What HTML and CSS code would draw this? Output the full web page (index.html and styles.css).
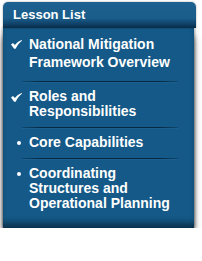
FILE: index.html
```html
<!DOCTYPE html>
<html lang="en">
<head>
<meta charset="utf-8">
<title>Lesson List</title>
<link rel="stylesheet" href="styles.css">
</head>
<body>
<div class="panel">
  <div class="header">Lesson List</div>
  <ul class="list">
    <li class="item item-first">
      <span class="marker"><svg class="check" width="11" height="9" viewBox="0 0 11 9"><path d="M0 4.4 L2 2.9 L3.9 4.9 C5.6 2.8 7.8 1 10.6 0 L11 0.7 C8.5 2.4 6.5 4.8 4.6 8.8 L3.1 8.8 Z" fill="#fff"/></svg></span>
      <span class="text">National Mitigation Framework Overview</span>
    </li>
    <li class="sep"></li>
    <li class="item">
      <span class="marker"><svg class="check" width="11" height="9" viewBox="0 0 11 9"><path d="M0 4.4 L2 2.9 L3.9 4.9 C5.6 2.8 7.8 1 10.6 0 L11 0.7 C8.5 2.4 6.5 4.8 4.6 8.8 L3.1 8.8 Z" fill="#fff"/></svg></span>
      <span class="text">Roles and Responsibilities</span>
    </li>
    <li class="sep"></li>
    <li class="item">
      <span class="marker"><span class="dot"></span></span>
      <span class="text">Core Capabilities</span>
    </li>
    <li class="sep"></li>
    <li class="item item-last">
      <span class="marker"><span class="dot"></span></span>
      <span class="text">Coordinating Structures and Operational Planning</span>
    </li>
  </ul>
</div>
</body>
</html>
```
FILE: styles.css
```css
html, body {
  margin: 0;
  padding: 0;
  background: #ffffff;
}
body {
  font-family: "Liberation Sans", Arial, sans-serif;
}
.panel {
  width: 193px;
  margin: 2px 0 0 3px;
  display: flex;
  flex-direction: column;
}
.header {
  height: 26px;
  line-height: 26px;
  padding-left: 10px;
  font-size: 13px;
  font-weight: bold;
  color: #ffffff;
  border-radius: 5px 5px 0 0;
  background: linear-gradient(to bottom, #1d6190 0%, #1a5d8b 62%, #11456c 82%, #082c48 100%);
  box-shadow: 0 0 2px rgba(0,0,0,0.4);
  position: relative;
  z-index: 1;
}
.list {
  list-style: none;
  margin: 0 2px 0 0;
  padding: 0;
  background: #145987;
  box-shadow: 0 7px 6px -1px rgba(0,0,0,0.6), 0 10px 8px rgba(0,0,0,0.25), -1px 0 3px rgba(0,0,0,0.3), 1px 0 3px rgba(0,0,0,0.3), inset 0 -8px 6px -3px rgba(0,0,0,0.45);
}
.item {
  display: flex;
  padding: 7px 0 8px 0;
  font-size: 14px;
  font-weight: bold;
  line-height: 15px;
  color: #ffffff;
}
.item-first {
  line-height: 18px;
  padding-bottom: 10px;
}
.item-last {
  padding-bottom: 17px;
}
.marker {
  flex: 0 0 26px;
  height: 15px;
  display: flex;
  align-items: center;
}
.item-first .marker {
  height: 18px;
}
.check {
  display: block;
  margin-left: 8px;
  margin-top: 1px;
}
.dot {
  display: block;
  width: 4px;
  height: 4px;
  border-radius: 50%;
  background: #ffffff;
  margin-left: 14px;
}
.text {
  flex: 1;
  padding-right: 14px;
}
.sep {
  height: 1px;
  margin: 0 16px 0 19px;
  background: linear-gradient(to right, rgba(6,34,56,0.3) 0%, #062842 12%, #062842 88%, rgba(6,34,56,0.3) 100%);
  box-shadow: 0 1px 0 rgba(40,110,160,0.35);
}
```
